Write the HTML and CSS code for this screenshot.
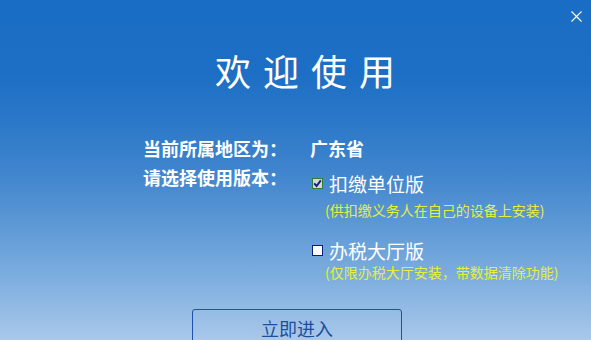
FILE: index.html
```html
<!DOCTYPE html>
<html lang="zh-CN">
<head>
<meta charset="utf-8">
<title>欢迎使用</title>
<link rel="stylesheet" href="styles.css">
</head>
<body>
<div class="window">
  <button class="close" aria-label="关闭">
    <svg width="11" height="11" viewBox="0 0 11 11"><path d="M0.5 0.5 L10.5 10.5 M10.5 0.5 L0.5 10.5" stroke="#ffffff" stroke-width="1.1" fill="none"/></svg>
  </button>
  <h1 class="title">欢迎使用</h1>
  <div class="info">
    <div class="label">当前所属地区为：</div>
    <div class="value">广东省</div>
    <div class="label">请选择使用版本：</div>
    <div class="options">
      <div class="option">
        <span class="box checked">
          <svg width="9" height="9" viewBox="0 0 9 9"><path d="M1.2 4.3 L3.6 7 L7.8 1.4" stroke="#101e7a" stroke-width="1.9" fill="none"/></svg>
        </span>
        <span class="opt-text">扣缴单位版</span>
      </div>
      <div class="note note1">(供扣缴义务人在自己的设备上安装)</div>
      <div class="option option2">
        <span class="box"></span>
        <span class="opt-text">办税大厅版</span>
      </div>
      <div class="note note2">(仅限办税大厅安装，带数据清除功能)</div>
    </div>
  </div>
  <div class="actions">
    <button class="enter">立即进入</button>
  </div>
</div>
</body>
</html>
```
FILE: styles.css
```css
html, body {
  margin: 0;
  padding: 0;
}
body {
  width: 591px;
  height: 340px;
  overflow: hidden;
  font-family: "Noto Sans CJK SC", "Noto Sans", sans-serif;
}
.window {
  position: relative;
  width: 591px;
  height: 340px;
  overflow: hidden;
  display: flex;
  flex-direction: column;
  background: linear-gradient(to bottom,
    #1a6dc4 0%,
    #1d6fc5 22%,
    #2a77c8 35%,
    #3f84cd 50%,
    #5b97d5 65%,
    #7eaedf 82%,
    #a9c8ea 100%);
}
.close {
  position: absolute;
  top: 11px;
  right: 9px;
  width: 11px;
  height: 11px;
  padding: 0;
  border: 0;
  background: none;
  display: flex;
}
.title {
  margin: 50px 0 0 215px;
  font-size: 36px;
  line-height: 40px;
  font-weight: 400;
  letter-spacing: 12px;
  color: #ffffff;
}
.info {
  margin: 46px 0 0 143px;
  display: grid;
  grid-template-columns: 167px auto;
  row-gap: 5px;
  color: #ffffff;
}
.label, .value {
  font-size: 18px;
  line-height: 24px;
  font-weight: 700;
}
.options {
  padding-top: 7px;
}
.option {
  display: flex;
  align-items: center;
  gap: 6px;
  height: 24px;
  margin-left: 2px;
}
.opt-text {
  font-size: 19px;
  line-height: 24px;
}
.box {
  width: 9px;
  height: 9px;
  border: 1px solid #0d1f7c;
  background: #ffffff;
  display: flex;
  align-items: center;
  justify-content: center;
  flex: none;
  margin-top: -2px;
}
.box.checked {
  border-color: #2e7d3c;
  background: #d4d6d8;
}
.note {
  font-size: 14px;
  line-height: 18px;
  color: #e4f03c;
  margin-left: 15px;
}
.note1 {
  margin-top: 5px;
}
.option2 {
  margin-top: 20px;
}
.note2 {
  margin-top: 0;
}
.actions {
  margin: 28px 0 0 192px;
}
.enter {
  width: 210px;
  height: 38px;
  padding: 0;
  border: 1px solid #1c52ad;
  border-radius: 3px;
  background: transparent;
  color: #1c4e9e;
  font-family: "Noto Sans CJK SC", "Noto Sans", sans-serif;
  font-size: 18px;
  line-height: 36px;
}
```
